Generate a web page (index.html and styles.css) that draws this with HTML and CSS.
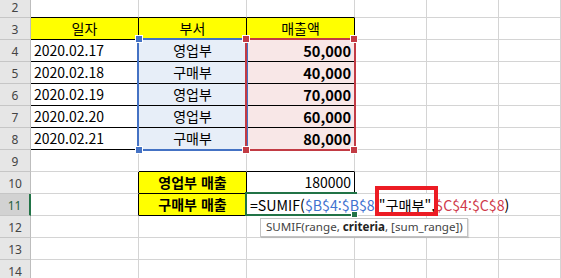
FILE: index.html
```html
<!DOCTYPE html>
<html lang="ko">
<head>
<meta charset="utf-8">
<link rel="stylesheet" href="styles.css">
</head>
<body>
<div class="sheet">
  <div class="grid">
    <!-- row 2 -->
    <div class="h">2</div><div class="c bb"></div><div class="c bb"></div><div class="c bb"></div><div class="c"></div><div class="c"></div><div class="c"></div>
    <!-- row 3 -->
    <div class="h">3</div><div class="c y bb br ctr">일자</div><div class="c y bb br ctr">부서</div><div class="c y bb br ctr">매출액</div><div class="c"></div><div class="c"></div><div class="c"></div>
    <!-- row 4 -->
    <div class="h">4</div><div class="c bb br">2020.02.17</div><div class="c blu bb br ctr">영업부</div><div class="c pk bb br num">50,000</div><div class="c"></div><div class="c"></div><div class="c"></div>
    <!-- row 5 -->
    <div class="h">5</div><div class="c bb br">2020.02.18</div><div class="c blu bb br ctr">구매부</div><div class="c pk bb br num">40,000</div><div class="c"></div><div class="c"></div><div class="c"></div>
    <!-- row 6 -->
    <div class="h">6</div><div class="c bb br">2020.02.19</div><div class="c blu bb br ctr">영업부</div><div class="c pk bb br num">70,000</div><div class="c"></div><div class="c"></div><div class="c"></div>
    <!-- row 7 -->
    <div class="h">7</div><div class="c bb br">2020.02.20</div><div class="c blu bb br ctr">영업부</div><div class="c pk bb br num">60,000</div><div class="c"></div><div class="c"></div><div class="c"></div>
    <!-- row 8 -->
    <div class="h">8</div><div class="c bb br">2020.02.21</div><div class="c blu bb br ctr">구매부</div><div class="c pk bb br num">80,000</div><div class="c"></div><div class="c"></div><div class="c"></div>
    <!-- row 9 -->
    <div class="h">9</div><div class="c"></div><div class="c bb"></div><div class="c bb"></div><div class="c"></div><div class="c"></div><div class="c"></div>
    <!-- row 10 -->
    <div class="h">10</div><div class="c br"></div><div class="c y bb br ctr b">영업부 매출</div><div class="c bb br rt">180000</div><div class="c"></div><div class="c"></div><div class="c"></div>
    <!-- row 11 -->
    <div class="h act">11</div><div class="c br"></div><div class="c y bb br ctr b">구매부 매출</div><div class="c bb br"></div><div class="c"></div><div class="c"></div><div class="c"></div>
    <!-- row 12 -->
    <div class="h">12</div><div class="c"></div><div class="c"></div><div class="c"></div><div class="c"></div><div class="c"></div><div class="c"></div>
    <!-- row 13 -->
    <div class="h">13</div><div class="c"></div><div class="c"></div><div class="c"></div><div class="c"></div><div class="c"></div><div class="c"></div>
    <!-- row 14 -->
    <div class="h">14</div><div class="c"></div><div class="c"></div><div class="c"></div><div class="c"></div><div class="c"></div><div class="c"></div>
  </div>

  <!-- range highlight: $B$4:$B$8 -->
  <div class="range rb"></div>
  <div class="hdl hb" style="left:136px;top:36px"></div>
  <div class="hdl hb" style="left:136px;top:147px"></div>

  <!-- range highlight: $C$4:$C$8 -->
  <div class="range rr"></div>
  <div class="hdl hr" style="left:243px;top:36px"></div>
  <div class="hdl hr" style="left:351px;top:36px"></div>
  <div class="hdl hr" style="left:243px;top:147px"></div>
  <div class="hdl hr" style="left:351px;top:147px"></div>

  <!-- active cell C11 -->
  <div class="active"></div>
  <div class="editor">=SUMIF(<span class="fb">$B$4:$B$8</span>,"구매부",<span class="fr">$C$4:$C$8</span>)</div>
  <div class="fill"></div>

  <!-- annotation -->
  <div class="mark"></div>

  <!-- tooltip -->
  <div class="tip">SUMIF(range, <b>criteria</b>, [sum_range])</div>
</div>
</body>
</html>
```

FILE: styles.css
```css
* { box-sizing: border-box; }
html, body { margin: 0; padding: 0; background: #fff; }
body { width: 561px; height: 278px; overflow: hidden; }

.sheet {
  position: relative;
  width: 561px;
  height: 278px;
  overflow: hidden;
  font-family: "Noto Sans CJK KR", "Noto Sans", sans-serif;
  font-size: 14px;
  color: #000;
}

.grid {
  display: grid;
  grid-template-columns: 31px 108px 108px 108px 72px 72px 1fr;
  grid-template-rows: 18px repeat(12, 22px);
}

.h {
  background: #e6e6e6;
  border-right: 1px solid #bdbdbd;
  border-bottom: 1px solid #c6c6c6;
  font-family: "Noto Sans", "Liberation Sans", sans-serif;
  font-size: 12px;
  color: #444;
  display: flex;
  align-items: flex-end;
  justify-content: center;
  padding-bottom: 3px;
  line-height: 13px;
}
.h.act {
  background: #d2d2d2;
  border-right: 2px solid #217346;
  color: #1f5e3a;
}

.c {
  border-right: 1px solid #d4d4d4;
  border-bottom: 1px solid #d4d4d4;
  line-height: 21px;
  padding: 0 3px;
  white-space: nowrap;
  overflow: visible;
}
.c.bb { border-bottom-color: #000; }
.c.br { border-right-color: #000; }
.y { background: #ffff00; }
.blu { background: #e7eef8; }
.pk { background: #f8e7e7; }
.ctr { text-align: center; }
.rt { text-align: right; }
.num { text-align: right; font-weight: 700; font-size: 14.6px; }
.b { font-weight: 700; }

.range {
  position: absolute;
  border: 2px solid;
}
.rb { left: 137px; top: 38px; width: 111px; height: 113px; border-color: #4472c4; }
.rr { left: 245px; top: 38px; width: 111px; height: 113px; border-color: #c23b44; }

.hdl {
  position: absolute;
  width: 6px;
  height: 6px;
  outline: 1px solid #fff;
}
.hb { background: #4472c4; }
.hr { background: #c23b44; }

.active {
  position: absolute;
  left: 245px;
  top: 192px;
  width: 112px;
  height: 24px;
  border: 2px solid #217346;
  border-right: none;
}
.editor {
  position: absolute;
  left: 247px;
  top: 194px;
  height: 20px;
  width: 285px;
  background: #fff;
  padding-left: 3px;
  line-height: 22px;
  font-size: 14.2px;
  white-space: nowrap;
}
.fb { color: #3f72cf; }
.fr { color: #cf3a4b; }

.fill {
  position: absolute;
  left: 352px;
  top: 212px;
  width: 5px;
  height: 5px;
  background: #217346;
  outline: 1px solid #fff;
}

.mark {
  position: absolute;
  left: 375px;
  top: 186px;
  width: 63px;
  height: 30px;
  border: 4px solid #ec1c24;
}

.tip {
  position: absolute;
  left: 260px;
  top: 218px;
  height: 19px;
  padding: 0 4px 0 5px;
  background: #fff;
  border: 1px solid #c3c3c3;
  box-shadow: 1px 1px 1px rgba(0,0,0,0.12);
  font-family: "Noto Sans", "Liberation Sans", sans-serif;
  font-size: 11.6px;
  line-height: 16px;
  color: #444;
  white-space: nowrap;
}
.tip b { color: #222; font-weight: 700; }
```
